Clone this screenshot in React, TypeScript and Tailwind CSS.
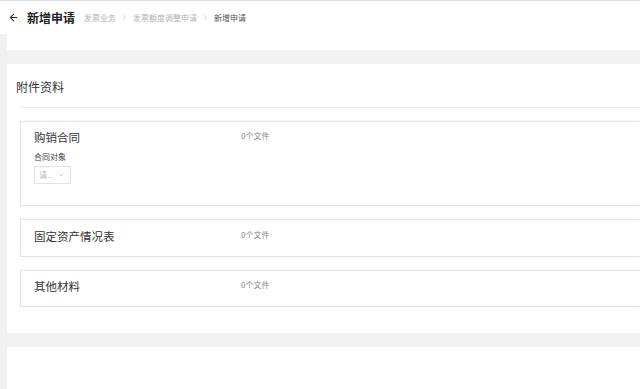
import { ArrowLeft, ChevronDown, ChevronRight } from "lucide-react";

const font = {
  fontFamily: '"Noto Sans CJK SC", "Noto Sans", "Liberation Sans", sans-serif',
};

const Crumbs = () => (
  <div className="ml-[9px] flex items-center gap-[5px] text-[8px] leading-none text-[#b4b4b4]">
    <span>发票业务</span>
    <ChevronRight size={7} strokeWidth={1.8} className="text-[#999]" />
    <span>发票额度调整申请</span>
    <ChevronRight size={7} strokeWidth={1.8} className="text-[#999]" />
    <span className="text-[#555]">新增申请</span>
  </div>
);

export default function App() {
  return (
    <div
      className="h-[389px] w-[640px] overflow-hidden bg-white"
      style={font}
    >
      <header className="flex h-[34px] items-center border-t border-[#dde2e8] pl-[8px]">
        <ArrowLeft size={11} strokeWidth={2.2} className="text-[#222]" />
        <h1 className="ml-[8px] text-[12px] font-bold leading-none text-[#222]">
          新增申请
        </h1>
        <Crumbs />
      </header>

      <div className="flex">
        <div className="w-[7px] shrink-0 bg-[#f0f0f0]" />
        <div className="min-w-0 flex-1">
          <div className="h-[16px] bg-white" />
          <div className="h-[14px] bg-[#f2f2f2]" />

          <section className="h-[269px] pl-[13px] pt-[15px]">
            <div className="-ml-[4px] text-[12px] leading-[16px] text-[#333]">
              附件资料
            </div>
            <div className="mt-[12px] border-t border-[#ececec]" />

            <div className="mt-[13px] flex flex-col gap-[13px]">
              <div className="flex border border-r-0 border-[#e3e3e3] pb-[21px] pt-[8px] shadow-[0_0_2px_rgba(0,0,0,0.05)]">
                <div className="w-[220px] pl-[13px]">
                  <div className="text-[11.5px] leading-[14px] text-[#333]">
                    购销合同
                  </div>
                  <div className="mt-[8px] text-[8px] leading-[10px] text-[#444]">
                    合同对象
                  </div>
                  <div className="mt-[4px] flex h-[18px] w-[37px] items-center justify-between border border-[#e3e3e3] pl-[4px] pr-[5px] text-[8px] text-[#bbb]">
                    <span>请...</span>
                    <ChevronDown size={8} strokeWidth={1.5} className="text-[#aaa]" />
                  </div>
                </div>
                <div className="text-[8px] leading-[12px] text-[#888]">
                  0个文件
                </div>
              </div>

              <div className="flex h-[38px] items-center border border-r-0 border-[#e3e3e3] shadow-[0_0_2px_rgba(0,0,0,0.05)]">
                <div className="-mt-[5px] w-[220px] pl-[13px] text-[11.5px] leading-[14px] text-[#333]">
                  固定资产情况表
                </div>
                <div className="-mt-[6px] text-[8px] leading-[12px] text-[#888]">
                  0个文件
                </div>
              </div>

              <div className="flex h-[37px] items-center border border-r-0 border-[#e3e3e3] shadow-[0_0_2px_rgba(0,0,0,0.05)]">
                <div className="-mt-[5px] w-[220px] pl-[13px] text-[11.5px] leading-[14px] text-[#333]">
                  其他材料
                </div>
                <div className="-mt-[7px] text-[8px] leading-[12px] text-[#888]">
                  0个文件
                </div>
              </div>
            </div>
          </section>

          <div className="h-[14px] bg-[#f2f2f2]" />
          <div className="h-[50px] bg-white" />
        </div>
      </div>
    </div>
  );
}
